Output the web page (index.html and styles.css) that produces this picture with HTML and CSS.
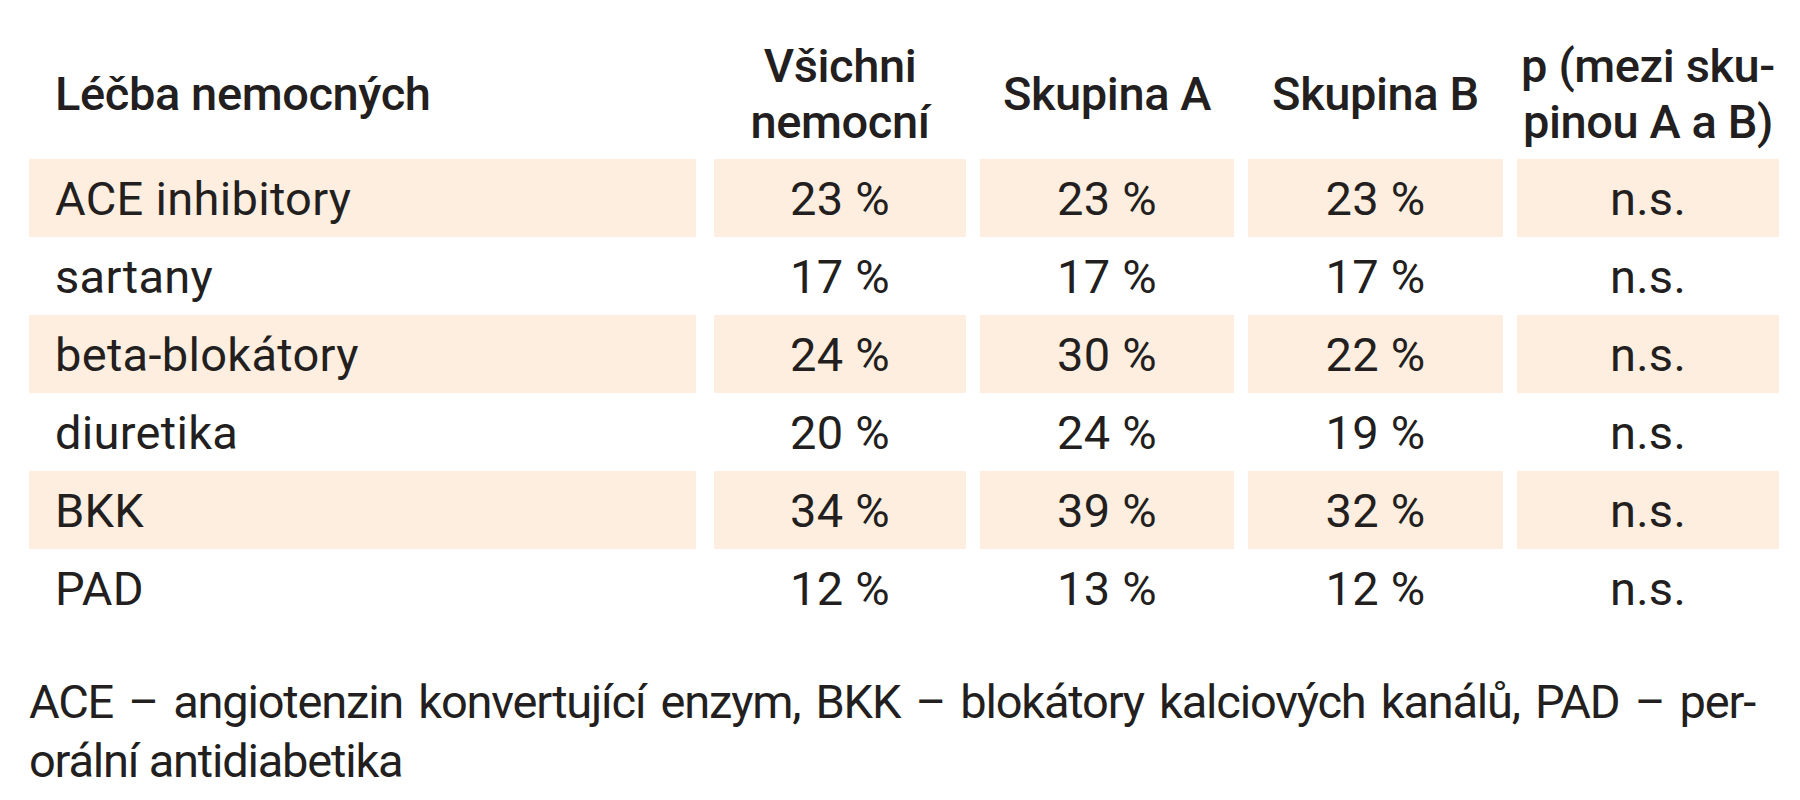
FILE: index.html
```html
<!DOCTYPE html>
<html lang="cs">
<head>
<meta charset="utf-8">
<title>Léčba nemocných</title>
<link rel="stylesheet" href="styles.css">
</head>
<body>
<div class="page">
  <div class="grid">
    <div class="hcell first">Léčba nemocných</div>
    <div class="hcell">Všichni<br>nemocní</div>
    <div class="hcell">Skupina A</div>
    <div class="hcell">Skupina B</div>
    <div class="hcell">p (mezi sku-<br>pinou A a B)</div>

    <div class="cell first shade">ACE inhibitory</div>
    <div class="cell shade">23 %</div>
    <div class="cell shade">23 %</div>
    <div class="cell shade">23 %</div>
    <div class="cell shade">n.s.</div>

    <div class="cell first">sartany</div>
    <div class="cell">17 %</div>
    <div class="cell">17 %</div>
    <div class="cell">17 %</div>
    <div class="cell">n.s.</div>

    <div class="cell first shade">beta-blokátory</div>
    <div class="cell shade">24 %</div>
    <div class="cell shade">30 %</div>
    <div class="cell shade">22 %</div>
    <div class="cell shade">n.s.</div>

    <div class="cell first">diuretika</div>
    <div class="cell">20 %</div>
    <div class="cell">24 %</div>
    <div class="cell">19 %</div>
    <div class="cell">n.s.</div>

    <div class="cell first shade">BKK</div>
    <div class="cell shade">34 %</div>
    <div class="cell shade">39 %</div>
    <div class="cell shade">32 %</div>
    <div class="cell shade">n.s.</div>

    <div class="cell first">PAD</div>
    <div class="cell">12 %</div>
    <div class="cell">13 %</div>
    <div class="cell">12 %</div>
    <div class="cell">n.s.</div>
  </div>
  <div class="note">
    <span class="note-line justify">ACE – angiotenzin konvertující enzym, BKK – blokátory kalciových kanálů, PAD – per-</span>
    <span class="note-line">orální antidiabetika</span>
  </div>
</div>
</body>
</html>
```

FILE: styles.css
```css
html, body {
  margin: 0;
  padding: 0;
  background: #ffffff;
}

body {
  font-family: Roboto, "Liberation Sans", sans-serif;
  color: #231f20;
  font-size: 47px;
}

.page {
  padding-left: 29px;
  width: 1742px;
}

.grid {
  display: grid;
  grid-template-columns: 671px 252px 254px 255px 262px;
  grid-template-rows: 130px repeat(6, 78px);
  column-gap: 14px;
  padding-top: 29px;
}

.hcell {
  display: flex;
  align-items: center;
  justify-content: center;
  text-align: center;
  font-weight: 500;
  line-height: 56px;
  letter-spacing: -0.4px;
  white-space: nowrap;
}

.cell {
  display: flex;
  align-items: center;
  justify-content: center;
  line-height: 1;
  letter-spacing: 0.3px;
  white-space: nowrap;
}

.first {
  justify-content: flex-start;
  text-align: left;
  padding-left: 26px;
  margin-right: 4px;
}

.shade {
  background: #fdeedf;
}

.note {
  margin-top: 45px;
  width: 1726px;
  line-height: 59px;
  letter-spacing: -1.2px;
}

.note-line {
  display: block;
}

.justify {
  word-spacing: -5px;
  text-align: justify;
  text-align-last: justify;
}
```
